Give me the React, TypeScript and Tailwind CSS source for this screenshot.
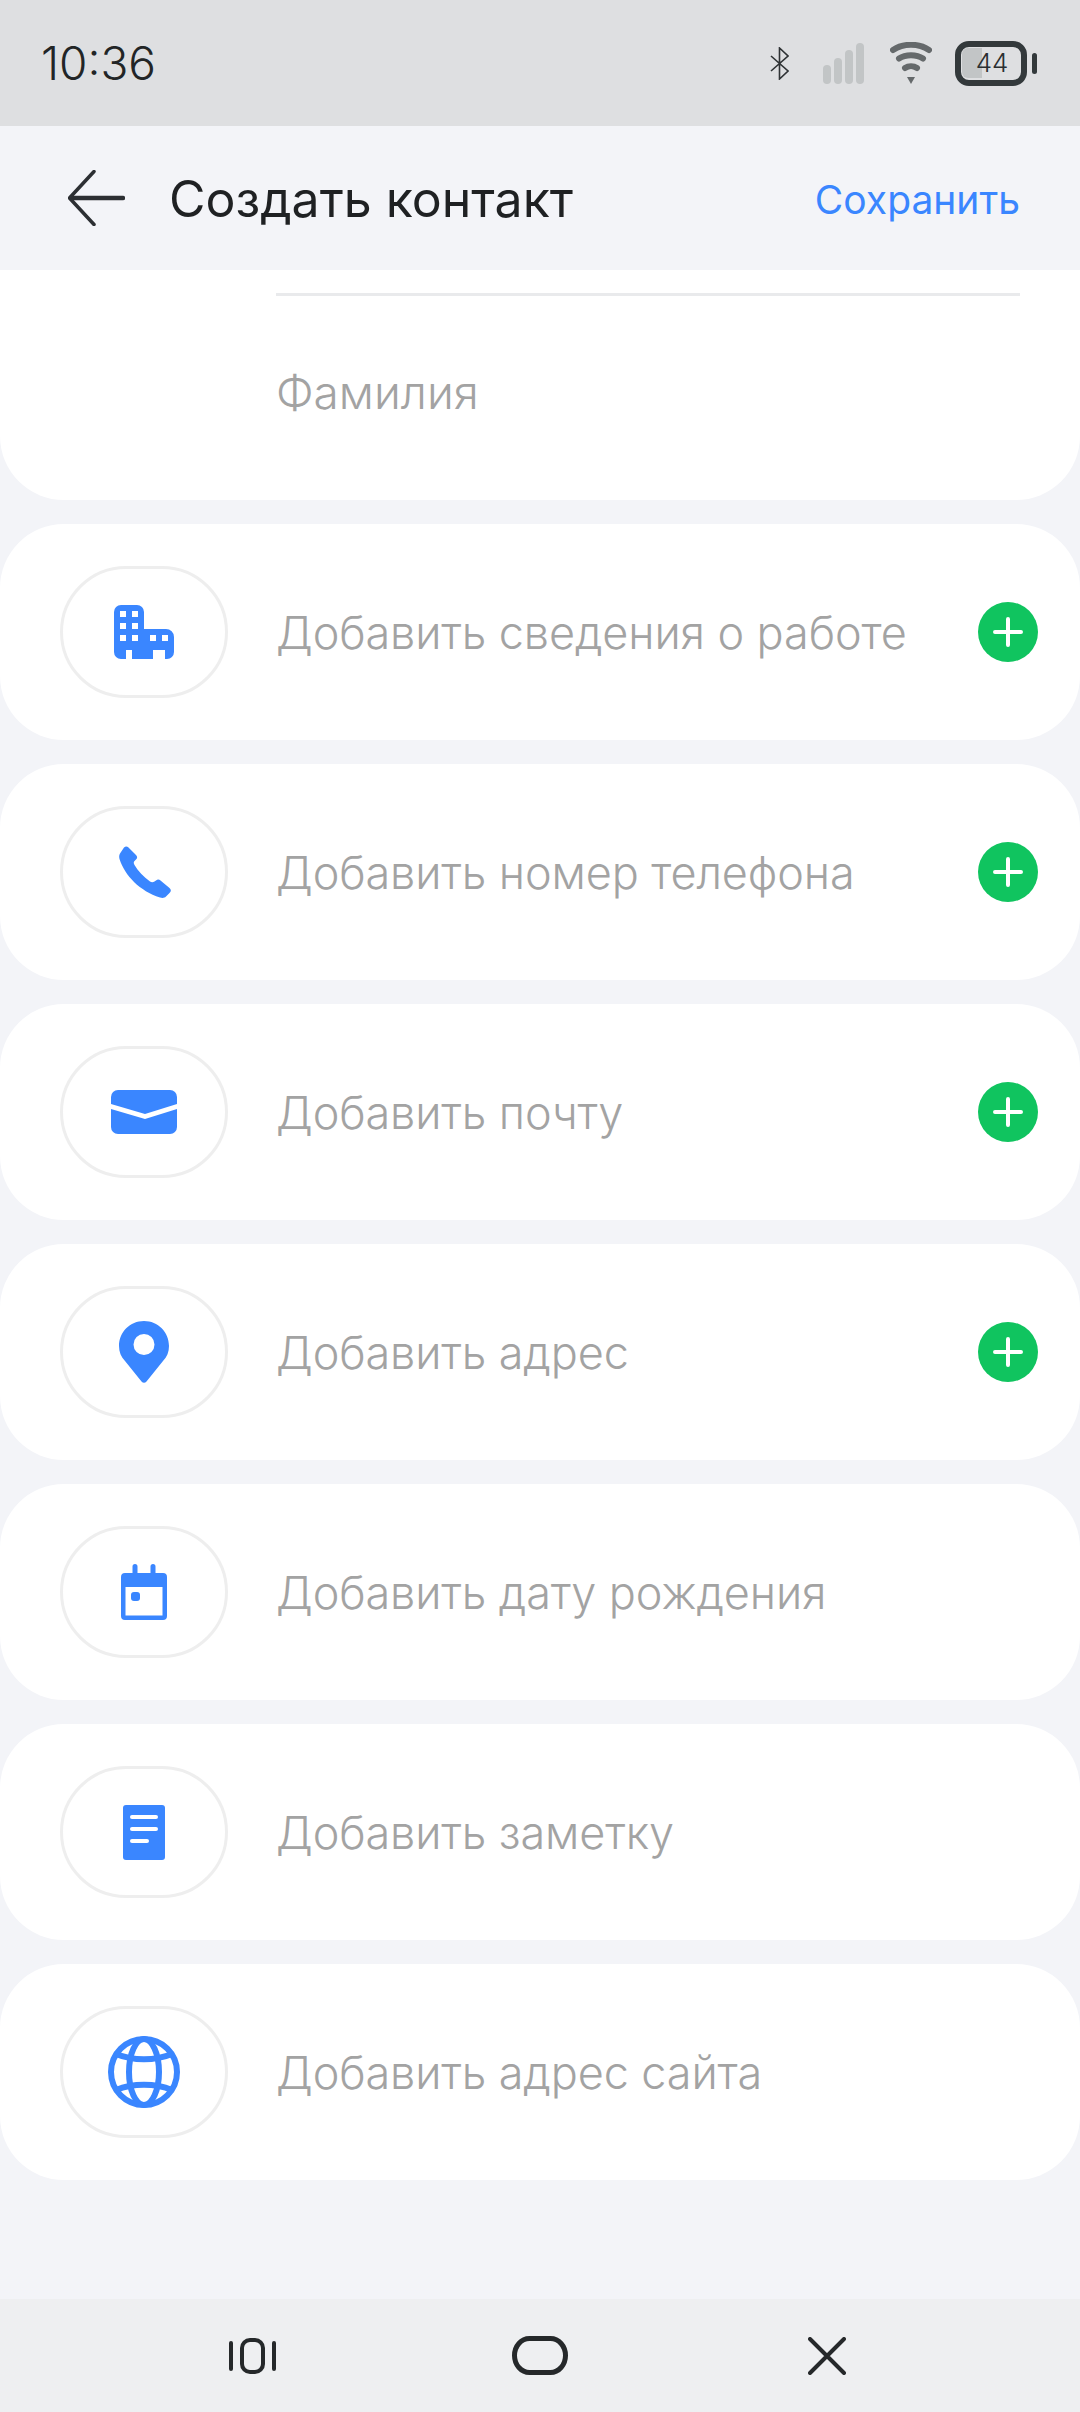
import React from "react";

const blue = "#3a86ff";

const BuildingIcon = () => (
  <svg width="60" height="54" viewBox="0 0 60 54">
    <path
      fill={blue}
      fillRule="evenodd"
      d="M7 0H23A7 7 0 0 1 30 7V24H52A8 8 0 0 1 60 32V47A7 7 0 0 1 53 54H51V45H39V54H18V45H12V54H7A7 7 0 0 1 0 47V7A7 7 0 0 1 7 0ZM6 6V12H12V6ZM18 6V12H24V6ZM6 18V24H12V18ZM18 18V24H24V18ZM6 30V36H12V30ZM18 30V36H24V30ZM36 30V36H42V30ZM48 30V36H54V30Z"
    />
  </svg>
);

const PhoneIcon = () => (
  <svg className="ml-[2px]" width="52" height="52" viewBox="0 0 52 52">
    <path
      fill={blue}
      d="M5 1.500C6.500 0 8 0 9.500 1.500L17 9C18.500 10.500 18.500 12 17 13.500L15.500 15C14.500 16 14.500 17.500 15.500 19C19 25 24.500 31 31 35.500C32.500 36.500 34 36.500 35.500 35.500L37 34.500C38.500 33 40 33 41.500 34.500L50.500 42C52.300 43.500 52.300 45.500 50.500 47L47 50.500C45.500 52 43.500 52.300 41 51.500C21 45 6 30 0.500 13C0 11 0 9 1 7.500Z"
    />
  </svg>
);

const MailIcon = () => (
  <svg width="66" height="44" viewBox="0 0 66 44">
    <path fill={blue} d="M7 0H59A7 7 0 0 1 66 7V14L34 24L0 14V7A7 7 0 0 1 7 0Z" />
    <path fill={blue} d="M0 19L34 29L66 19V37A7 7 0 0 1 59 44H7A7 7 0 0 1 0 37Z" />
  </svg>
);

const PinIcon = () => (
  <svg width="50" height="62" viewBox="0 0 50 62">
    <path
      fill={blue}
      fillRule="evenodd"
      d="M25 0C39 0 50 11 50 25C50 31 48 36 44 40L27.500 60.500C26 62.300 24 62.300 22.500 60.500L6 40C2 36 0 31 0 25C0 11 11 0 25 0ZM25 13A10.500 10.500 0 1 0 25 34A10.500 10.500 0 1 0 25 13Z"
    />
  </svg>
);

const CalendarIcon = () => (
  <svg width="46" height="56" viewBox="0 0 46 56">
    <path
      fill={blue}
      fillRule="evenodd"
      d="M14 0A2.500 2.500 0 0 1 16.500 2.500V9H29.500V2.500A2.500 2.500 0 0 1 34.500 2.500V9H42A4 4 0 0 1 46 13V52A4 4 0 0 1 42 56H4A4 4 0 0 1 0 52V13A4 4 0 0 1 4 9H11.500V2.500A2.500 2.500 0 0 1 14 0ZM4.500 23V51.500H41.500V23Z"
    />
    <rect x="10" y="28" width="9" height="9" rx="3" fill={blue} />
  </svg>
);

const NoteIcon = () => (
  <svg width="42" height="55" viewBox="0 0 42 55">
    <rect width="42" height="55" rx="3" fill={blue} />
    <rect x="7" y="10" width="28" height="4" rx="2" fill="#fff" />
    <rect x="7" y="22" width="28" height="4" rx="2" fill="#fff" />
    <rect x="7" y="34" width="19" height="4" rx="2" fill="#fff" />
  </svg>
);

const GlobeIcon = () => (
  <svg width="72" height="72" viewBox="0 0 72 72" fill="none" stroke={blue} strokeWidth="6">
    <circle cx="36" cy="36" r="33" />
    <ellipse cx="36" cy="36" rx="15" ry="33" />
    <path d="M8 18C25 25 47 25 64 18" />
    <path d="M8 54C25 47 47 47 64 54" />
  </svg>
);

const rows = [
  { label: "Добавить сведения о работе", icon: <BuildingIcon />, plus: true },
  { label: "Добавить номер телефона", icon: <PhoneIcon />, plus: true },
  { label: "Добавить почту", icon: <MailIcon />, plus: true },
  { label: "Добавить адрес", icon: <PinIcon />, plus: true },
  { label: "Добавить дату рождения", icon: <CalendarIcon />, plus: false },
  { label: "Добавить заметку", icon: <NoteIcon />, plus: false },
  { label: "Добавить адрес сайта", icon: <GlobeIcon />, plus: false },
];

const StatusIcons = () => (
  <div className="flex items-center">
    <svg width="19" height="33" viewBox="0 0 19 33" fill="none" stroke="#2f3335" strokeWidth="1.600">
      <path d="M1 9L18 24L9.500 32V1L18 9L1 24" />
    </svg>
    <svg className="ml-[34px]" width="41" height="41" viewBox="0 0 41 41" fill="#c2c5c6">
      <rect x="0" y="22" width="8" height="19" rx="4" />
      <rect x="11" y="15" width="8" height="26" rx="4" />
      <rect x="22" y="7" width="8" height="34" rx="4" />
      <rect x="33" y="0" width="8" height="41" rx="4" />
    </svg>
    <svg className="ml-[26px]" width="42" height="42" viewBox="0 0 42 42" fill="none" stroke="#65696b" strokeWidth="6" strokeLinecap="round">
      <path d="M3 8C13 1 29 1 39 8" />
      <path d="M9 16.500C15.500 12 26.500 12 33 16.500" />
      <path d="M15 26C18.500 23.500 23.500 23.500 27 26" />
      <path d="M17 35H25L21 42Z" fill="#65696b" stroke="none" />
    </svg>
    <div className="relative ml-[23px] h-[45px] w-[72px] rounded-[14px] border-[6px] border-[#33393b]">
      <div className="absolute top-[1px] left-[1px] h-[30px] w-[20px] rounded-l-[6px] bg-[#c2c5c6]" />
      <span className="absolute inset-0 flex items-center justify-center pl-[2px] text-[26px] leading-none font-light text-[#2b2f31]">44</span>
    </div>
    <div className="ml-[5px] h-[21px] w-[5px] rounded-full bg-[#33393b]" />
  </div>
);

export default function App() {
  return (
    <div className="flex h-[2412px] w-[1080px] flex-col overflow-hidden bg-[#f3f4f8] font-['Inter',sans-serif] font-light">
      {/* status bar */}
      <div className="flex h-[126px] shrink-0 items-center justify-between bg-[#dedfe1] pr-[43px] pl-[41px]">
        <span className="text-[46px] leading-none text-[#222526]">10:36</span>
        <StatusIcons />
      </div>

      {/* header */}
      <div className="flex h-[144px] shrink-0 items-center pr-[60px] pl-[68px]">
        <svg width="57" height="56" viewBox="0 0 57 56" fill="none" stroke="#2c2f33" strokeLinecap="round" strokeLinejoin="round">
          <path d="M26 1.500L1.500 28L26 54.500" strokeWidth="3.500" />
          <path d="M3 28H55" strokeWidth="4.500" />
        </svg>
        <h1 className="mt-[2px] ml-[44px] flex-1 text-[50px] leading-none font-normal text-[#1f2123]">Создать контакт</h1>
        <button className="mt-[2px] text-[39px] leading-none font-normal text-[#3a86ff]">Сохранить</button>
      </div>

      {/* name card, scrolled under the header */}
      <div className="h-[230px] shrink-0 rounded-b-[64px] bg-white pt-[23px] pr-[60px] pl-[276px]">
        <div className="h-[3px] bg-[#e9eaec]" />
        <div className="mt-[71px] text-[46px] leading-[50px] text-[#a3a3a3]">Фамилия</div>
      </div>

      <div className="mt-[24px] flex flex-col gap-[24px]">
        {rows.map((row) => (
          <div key={row.label} className="flex h-[216px] items-center rounded-[64px] bg-white pr-[42px] pl-[60px]">
            <div className="flex h-[132px] w-[168px] shrink-0 items-center justify-center rounded-[66px] border-[3px] border-[#eeeeee]">
              {row.icon}
            </div>
            <span className="ml-[48px] flex-1 text-[45px] leading-none tracking-[-0.1px] text-[#a3a3a3]">{row.label}</span>
            {row.plus && (
              <div className="flex h-[60px] w-[60px] items-center justify-center rounded-full bg-[#10c45f]">
                <svg width="30" height="30" viewBox="0 0 30 30" stroke="#fff" strokeWidth="4" strokeLinecap="round">
                  <path d="M15 2V28M2 15H28" />
                </svg>
              </div>
            )}
          </div>
        ))}
      </div>

      {/* bottom nav */}
      <div className="mt-auto flex h-[113px] shrink-0 items-center bg-[#eeeff1] pl-[229px]">
        <svg width="47" height="36" viewBox="0 0 47 36" fill="none" stroke="#25282a" strokeLinecap="round">
          <path d="M2 5V31M45 5V31" strokeWidth="4" />
          <rect x="13" y="2" width="21" height="32" rx="8" strokeWidth="4" />
        </svg>
        <svg className="ml-[236px]" width="56" height="39" viewBox="0 0 56 39" fill="none" stroke="#25282a" strokeWidth="5">
          <rect x="2.500" y="2.500" width="51" height="34" rx="15" ry="17" />
        </svg>
        <svg className="ml-[240px]" width="38" height="38" viewBox="0 0 38 38" fill="none" stroke="#25282a" strokeWidth="4" strokeLinecap="round">
          <path d="M2 2L36 36M36 2L2 36" />
        </svg>
      </div>
    </div>
  );
}
